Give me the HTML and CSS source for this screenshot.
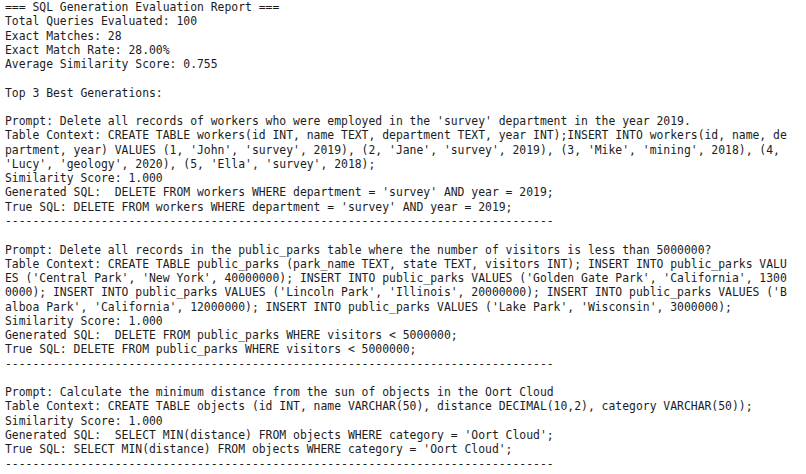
FILE: index.html
```html
<!DOCTYPE html>
<html lang="en">
<head>
<meta charset="utf-8">
<title>SQL Generation Evaluation Report</title>
<link rel="stylesheet" href="styles.css">
</head>
<body>
<pre class="report">=== SQL Generation Evaluation Report ===
Total Queries Evaluated: 100
Exact Matches: 28
Exact Match Rate: 28.00%
Average Similarity Score: 0.755

Top 3 Best Generations:

Prompt: Delete all records of workers who were employed in the 'survey' department in the year 2019.
Table Context: CREATE TABLE workers(id INT, name TEXT, department TEXT, year INT);INSERT INTO workers(id, name, de
partment, year) VALUES (1, 'John', 'survey', 2019), (2, 'Jane', 'survey', 2019), (3, 'Mike', 'mining', 2018), (4,
'Lucy', 'geology', 2020), (5, 'Ella', 'survey', 2018);
Similarity Score: 1.000
Generated SQL:  DELETE FROM workers WHERE department = 'survey' AND year = 2019;
True SQL: DELETE FROM workers WHERE department = 'survey' AND year = 2019;
--------------------------------------------------------------------------------

Prompt: Delete all records in the public_parks table where the number of visitors is less than 5000000?
Table Context: CREATE TABLE public_parks (park_name TEXT, state TEXT, visitors INT); INSERT INTO public_parks VALU
ES ('Central Park', 'New York', 40000000); INSERT INTO public_parks VALUES ('Golden Gate Park', 'California', 1300
0000); INSERT INTO public_parks VALUES ('Lincoln Park', 'Illinois', 20000000); INSERT INTO public_parks VALUES ('B
alboa Park', 'California', 12000000); INSERT INTO public_parks VALUES ('Lake Park', 'Wisconsin', 3000000);
Similarity Score: 1.000
Generated SQL:  DELETE FROM public_parks WHERE visitors &lt; 5000000;
True SQL: DELETE FROM public_parks WHERE visitors &lt; 5000000;
--------------------------------------------------------------------------------

Prompt: Calculate the minimum distance from the sun of objects in the Oort Cloud
Table Context: CREATE TABLE objects (id INT, name VARCHAR(50), distance DECIMAL(10,2), category VARCHAR(50));
Similarity Score: 1.000
Generated SQL:  SELECT MIN(distance) FROM objects WHERE category = 'Oort Cloud';
True SQL: SELECT MIN(distance) FROM objects WHERE category = 'Oort Cloud';
--------------------------------------------------------------------------------</pre>
</body>
</html>
```

FILE: styles.css
```css
html, body {
  margin: 0;
  padding: 0;
  background: #ffffff;
}

.report {
  margin: 0;
  padding: 0 0 0 5px;
  font-family: "DejaVu Sans Mono", "Liberation Mono", monospace;
  font-size: 11.4px;
  line-height: 14.27px;
  color: #1c1c1c;
  white-space: pre;
}
```
